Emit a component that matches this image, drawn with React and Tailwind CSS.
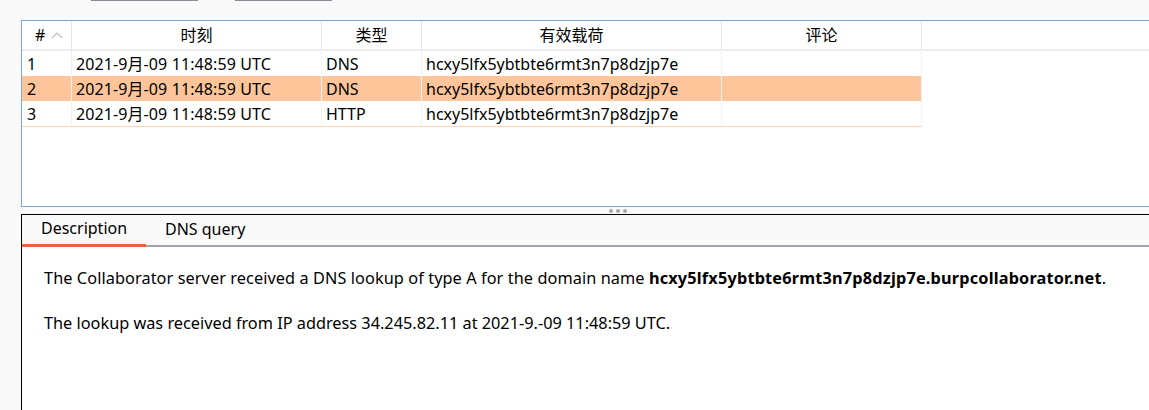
import React from 'react';

const rows = [
  { id: 1, time: '2021-9月-09 11:48:59 UTC', type: 'DNS', payload: 'hcxy5lfx5ybtbte6rmt3n7p8dzjp7e' },
  { id: 2, time: '2021-9月-09 11:48:59 UTC', type: 'DNS', payload: 'hcxy5lfx5ybtbte6rmt3n7p8dzjp7e', selected: true },
  { id: 3, time: '2021-9月-09 11:48:59 UTC', type: 'HTTP', payload: 'hcxy5lfx5ybtbte6rmt3n7p8dzjp7e' },
];

const font = { fontFamily: '"Noto Sans", "Noto Sans CJK SC", sans-serif' };

export default function App() {
  return (
    <div className="w-[1149px] h-[410px] bg-[#f9f9f9] overflow-hidden text-[16px] text-black" style={font}>
      {/* top buttons edge */}
      <div className="flex h-[20px]">
        <div className="ml-[91px] w-[107px] h-px bg-[#8e8a9a]" />
        <div className="ml-[37px] w-[97px] h-px bg-[#8e8a9a]" />
      </div>

      {/* table panel */}
      <div className="ml-[21px] h-[187px] border border-r-0 border-[#7fa6d4] bg-white">
        <div className="flex h-[30px] border-b-2 border-[#ececec]">
          <div className="w-[50px] flex items-center pl-[13px] gap-[6px] border-r border-[#e4e4e4]">
            <span>#</span>
            <svg width="12" height="8" viewBox="0 0 12 8" fill="none" stroke="#bcbcbc" strokeWidth="1.2">
              <path d="M1 7 L6 2 L11 7" />
            </svg>
          </div>
          <div className="w-[250px] flex items-center justify-center border-r border-[#e4e4e4]">时刻</div>
          <div className="w-[100px] flex items-center justify-center border-r border-[#e4e4e4]">类型</div>
          <div className="w-[300px] flex items-center justify-center border-r border-[#e4e4e4]">有效载荷</div>
          <div className="w-[200px] flex items-center justify-center border-r border-[#e4e4e4]">评论</div>
        </div>
        <div className="w-[900px] border-b border-[#ffd2b0]">
          {rows.map((r) => (
            <div key={r.id} className={`flex h-[25px] items-center ${r.selected ? 'bg-[#ffc59a]' : ''}`}>
              <div className="w-[50px] h-full flex items-center pl-[5px] border-r border-[#f2f2f2]">{r.id}</div>
              <div className="w-[250px] h-full flex items-center pl-[4px] border-r border-[#f2f2f2] tracking-[0.1px]">{r.time}</div>
              <div className="w-[100px] h-full flex items-center pl-[4px] border-r border-[#f2f2f2]">{r.type}</div>
              <div className="w-[300px] h-full flex items-center pl-[4px] border-r border-[#f2f2f2]">{r.payload}</div>
              <div className="w-[200px] h-full border-r border-[#f2f2f2]" />
            </div>
          ))}
        </div>
      </div>

      {/* splitter */}
      <div className="h-[7px] flex items-center justify-center gap-[3px] pl-[86px]">
        <span className="w-[4px] h-[4px] rounded-full bg-[#a8a8a8]" />
        <span className="w-[4px] h-[4px] rounded-full bg-[#a8a8a8]" />
        <span className="w-[4px] h-[4px] rounded-full bg-[#a8a8a8]" />
      </div>

      {/* detail panel */}
      <div className="ml-[21px] h-[200px] border-t border-l border-black bg-white">
        <div className="flex h-[32px] bg-[#f9f9f9] border-b-2 border-[#a3a1b0]">
          <div className="w-[124px] flex items-center pl-[19px] pb-[3px] border-b-[3px] border-[#f06137] -mb-[2px]">Description</div>
          <div className="flex items-center pl-[19px] pb-[3px]">DNS query</div>
        </div>
        <div className="pl-[22px] pt-[20px] text-[16.3px]">
          <p className="leading-[22px] tracking-[0.08px]">
            The Collaborator server received a DNS lookup of type A for the domain name{' '}
            <b className="font-bold tracking-[0.18px]">hcxy5lfx5ybtbte6rmt3n7p8dzjp7e.burpcollaborator.net</b>.
          </p>
          <p className="mt-[23px] leading-[22px]">
            The lookup was received from IP address 34.245.82.11 at 2021-9.-09 11:48:59 UTC.
          </p>
        </div>
      </div>
    </div>
  );
}
